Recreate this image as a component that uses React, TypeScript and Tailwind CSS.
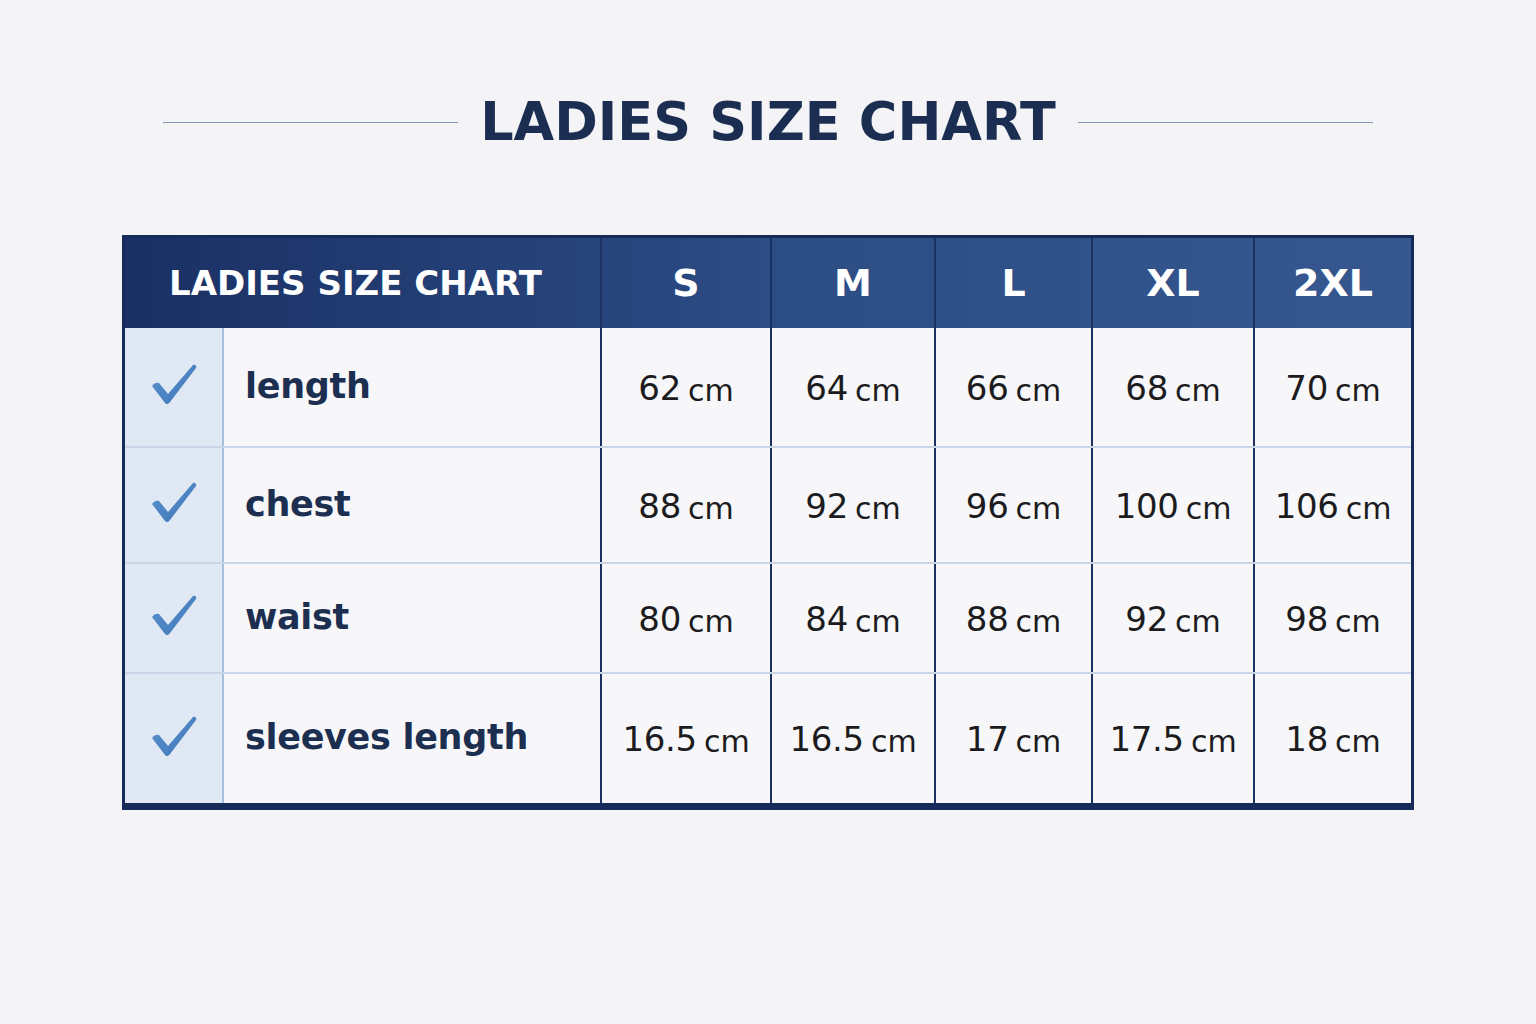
const sizes = ['S', 'M', 'L', 'XL', '2XL']

const rows = [
  { label: 'length', h: 'h-[118px]', values: ['62', '64', '66', '68', '70'] },
  { label: 'chest', h: 'h-[116px] border-t-2', values: ['88', '92', '96', '100', '106'] },
  { label: 'waist', h: 'h-[110px] border-t-2', values: ['80', '84', '88', '92', '98'] },
  { label: 'sleeves length', h: 'h-[131px] border-t-2', values: ['16.5', '16.5', '17', '17.5', '18'] },
]

const grid = 'grid grid-cols-[97px_378px_170px_164px_157px_162px_158px]'

function Check() {
  return (
    <svg width="46" height="42" viewBox="0 0 46 42">
      <defs>
        <linearGradient id="chk" x1="0" y1="0" x2="1" y2="1">
          <stop offset="0" stopColor="#5b93d0" />
          <stop offset="1" stopColor="#3f76b8" />
        </linearGradient>
      </defs>
      <path d="M1 22 C3 19 6 18 8 19 L17 30 L42 1 C44 0 46 2 45 4 L19 38 C17 41 15 40 14 39 Z" fill="url(#chk)" />
    </svg>
  )
}

export default function App() {
  return (
    <div className="min-h-screen bg-[#f4f4f6] pt-[94px] font-['DejaVu_Sans',sans-serif]">
      <div className="flex h-[56px] items-center justify-center gap-[22px]">
        <div className="h-px w-[295px] bg-[#8499b9]" />
        <h1 className="text-[52.5px] font-bold leading-[56px] text-[#1b2e52]">LADIES SIZE CHART</h1>
        <div className="h-px w-[295px] bg-[#8499b9]" />
      </div>

      <div className="mx-auto mt-[85px] w-[1292px] border-[3px] border-b-[7px] border-[#162b5a] bg-[#f7f7fa]">
        <div className={`${grid} h-[90px] bg-gradient-to-r from-[#1a3064] via-[#2c4c84] to-[#36578f] text-white`}>
          <div className="col-span-2 flex items-center pl-[44px] text-[34px] font-bold">
            LADIES SIZE CHART
          </div>
          {sizes.map((s) => (
            <div key={s} className="flex items-center justify-center border-l-2 border-[#1b3161] text-[38px] font-bold">
              {s}
            </div>
          ))}
        </div>

        {rows.map((r) => (
          <div key={r.label} className={`${grid} ${r.h} border-[#c9d6e8]`}>
            <div className="flex items-center justify-center bg-[#dfe8f3] pb-[4px]">
              <Check />
            </div>
            <div className="flex items-center border-l-2 border-[#a9c0dc] pl-[21px] pb-[2px] text-[35px] font-bold tracking-[-0.3px] text-[#1d2f50]">
              {r.label}
            </div>
            {r.values.map((v, i) => (
              <div key={i} className="flex items-center justify-center border-l-2 border-[#1b3161] pt-[2px] text-[#1c1c20]">
                <span className="text-[34px] tracking-[-0.3px]">{v}</span>
                <span className="ml-[7px] mt-[4px] text-[30px]">cm</span>
              </div>
            ))}
          </div>
        ))}
      </div>
    </div>
  )
}
